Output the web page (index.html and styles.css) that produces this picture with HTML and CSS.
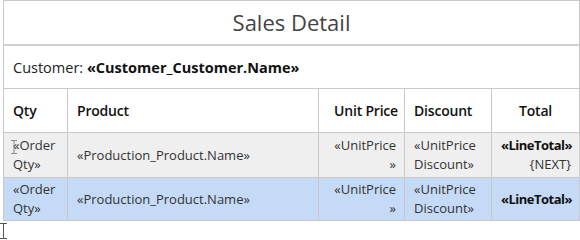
FILE: index.html
```html
<!DOCTYPE html>
<html>
<head>
<meta charset="utf-8">
<link rel="stylesheet" href="styles.css">
</head>
<body>
<div class="page">
<table class="report">
  <colgroup>
    <col class="c-qty"><col class="c-prod"><col class="c-price"><col class="c-disc"><col class="c-total">
  </colgroup>
  <tr class="title-row"><td colspan="5" class="title">Sales Detail</td></tr>
  <tr class="cust-row"><td colspan="5" class="cust">Customer: <b>«Customer_Customer.Name»</b></td></tr>
  <tr class="head-row">
    <th class="left">Qty</th>
    <th class="left">Product</th>
    <th class="right">Unit Price</th>
    <th class="left">Discount</th>
    <th class="center">Total</th>
  </tr>
  <tr class="row row-gray">
    <td class="left">«Order Qty»</td>
    <td class="left">«Production_Product.Name»</td>
    <td class="right">«UnitPrice<br>»</td>
    <td class="left">«UnitPrice Discount»</td>
    <td class="right"><b>«LineTotal»</b><br>{NEXT}</td>
  </tr>
  <tr class="row row-blue last">
    <td class="left">«Order Qty»</td>
    <td class="left">«Production_Product.Name»</td>
    <td class="right">«UnitPrice<br>»</td>
    <td class="left">«UnitPrice Discount»</td>
    <td class="right"><b>«LineTotal»</b></td>
  </tr>
</table>
<svg class="cursor cursor-a" width="6" height="14" viewBox="0 0 6 14"><path d="M0 0.5H6M0 13.5H6M3 0.5V13.5" stroke="#8a8a8a" stroke-width="1" fill="none"/></svg>
<svg class="cursor cursor-b" width="7" height="16" viewBox="0 0 7 16"><path d="M0 0.5H7M0 15.5H7M3.5 0.5V15.5" stroke="#555" stroke-width="1" fill="none"/></svg>
</div>
</body>
</html>
```
FILE: styles.css
```css
html, body {
  margin: 0;
  padding: 0;
  background: #fff;
}
.page {
  position: relative;
  width: 580px;
  height: 240px;
  font-family: "Open Sans", "Noto Sans", sans-serif;
  color: #222;
}
.report {
  margin-left: 3px;
  width: 577px;
  border-collapse: collapse;
  table-layout: fixed;
}
.c-qty { width: 64px; }
.c-prod { width: 251px; }
.c-price { width: 86px; }
.c-disc { width: 87px; }
.c-total { width: 88px; }
.report td, .report th {
  border: 1px solid #c9c9c9;
  padding: 0 9px;
  vertical-align: middle;
  font-size: 13px;
  line-height: 19px;
}
.title-row td { height: 43px; }
.title {
  text-align: center;
  font-size: 22px !important;
  color: #444;
  font-weight: 400;
}
.cust-row td { height: 42px; border-top: 2px solid #cfcfcf; }
.cust {
  font-size: 14.5px !important;
  color: #222;
}
.cust b { font-weight: 700; color: #111; }
.head-row th {
  height: 43px;
  font-size: 14px;
  font-weight: 600;
  letter-spacing: -0.2px;
  color: #111;
}
.report th.right { padding: 0 6px 0 4px; }
.row td { height: 44px; color: #333; }
.row.last td { height: 42px; }
.row b { color: #111; letter-spacing: -0.5px; }
.row-gray td { background: #efefef; }
.row-blue td { background: #c5daf6; }
.left { text-align: left; }
.right { text-align: right; }
.center { text-align: center; }
.report td.right { padding-right: 8px; }
.cursor { position: absolute; }
.cursor-a { left: 11px; top: 140px; }
.cursor-b { left: 0; top: 223px; }
```
